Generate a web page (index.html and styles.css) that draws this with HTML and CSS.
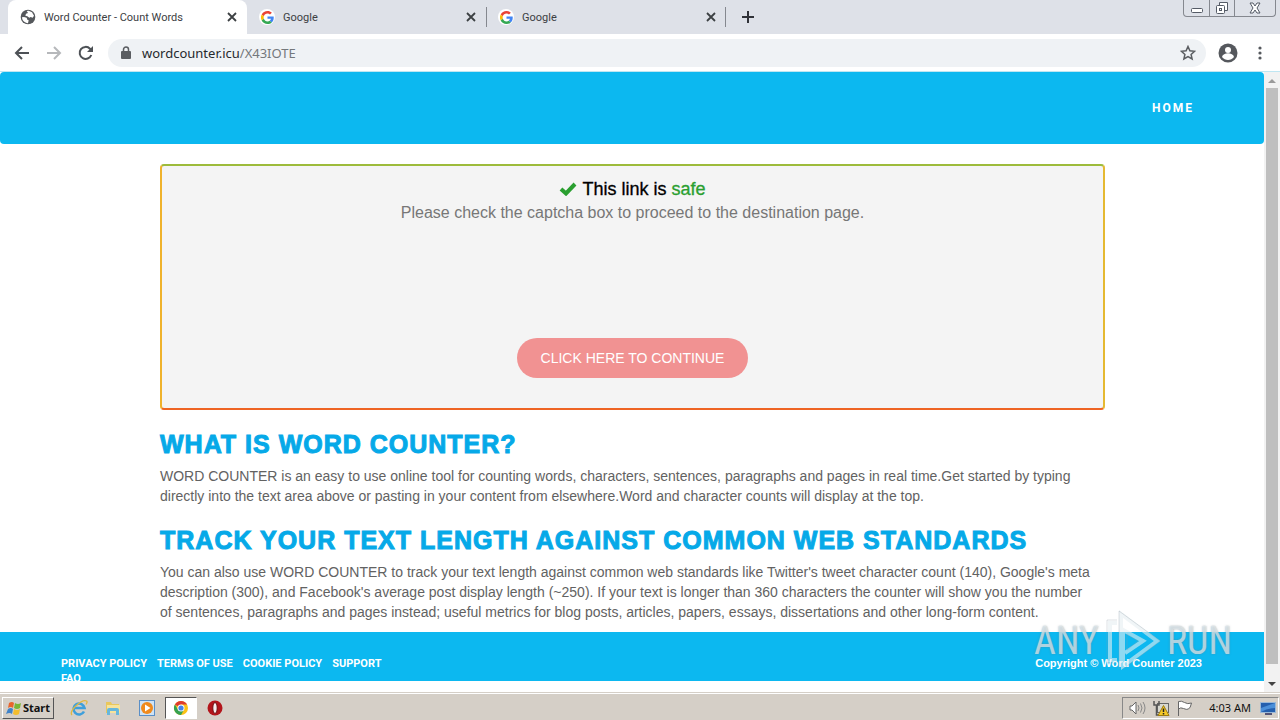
FILE: index.html
```html
<!DOCTYPE html>
<html lang="en">
<head>
<meta charset="utf-8">
<title>Word Counter - Count Words</title>
<link rel="stylesheet" href="styles.css">
</head>
<body>
<svg class="defs" aria-hidden="true">
  <symbol id="google" viewBox="0 0 48 48">
    <path fill="#EA4335" d="M24 9.5c3.5 0 6.700 1.200 9.200 3.600l6.900-6.900C35.900 2.400 30.500 0 24 0 14.600 0 6.500 5.400 2.600 13.200l8 6.200C12.400 13.700 17.700 9.500 24 9.500z"/>
    <path fill="#4285F4" d="M47 24.500c0-1.600-.2-3.100-.4-4.500H24v9h12.900c-.6 3-2.200 5.500-4.700 7.200l7.700 6C44.400 38 47 31.800 47 24.500z"/>
    <path fill="#FBBC05" d="M10.500 28.600a14.500 14.500 0 0 1 0-9.200l-8-6.200a24 24 0 0 0 0 21.600z"/>
    <path fill="#34A853" d="M24 48c6.500 0 11.900-2.100 15.900-5.800l-7.700-6c-2.200 1.500-4.900 2.300-8.200 2.300-6.300 0-11.600-4.200-13.500-9.900l-8 6.200C6.500 42.600 14.600 48 24 48z"/>
  </symbol>
  <symbol id="cross" viewBox="0 0 10 10"><path d="M1 1l8 8M9 1l-8 8" stroke="#3c4043" stroke-width="1.800"/></symbol>
</svg>

<div class="tabstrip">
  <div class="tab tab-active">
    <svg class="favicon" viewBox="0 0 24 24"><circle cx="12" cy="12" r="11" fill="#55585c"/><path fill="#fff" d="M3 12.500l3-.5 4 1 1 3 2 1-1 4.500C7 21 3 17 3 12.500zM10 3l3-.5 5 2.500 3 5-2 3-3-1-2 1-3-2-3-1 1-3 3-1z"/></svg>
    <span class="tab-title">Word Counter - Count Words</span>
    <button class="tab-close" aria-label="Close tab"><svg width="10" height="10"><use href="#cross"/></svg></button>
  </div>
  <div class="tab">
    <span class="favicon favicon-g"><svg width="13" height="13"><use href="#google"/></svg></span>
    <span class="tab-title">Google</span>
    <button class="tab-close" aria-label="Close tab"><svg width="10" height="10"><use href="#cross"/></svg></button>
  </div>
  <div class="tab tab-ruled">
    <span class="favicon favicon-g"><svg width="13" height="13"><use href="#google"/></svg></span>
    <span class="tab-title">Google</span>
    <button class="tab-close" aria-label="Close tab"><svg width="10" height="10"><use href="#cross"/></svg></button>
  </div>
  <button class="new-tab" aria-label="New tab"><svg width="12" height="12"><path d="M6 0v12M0 6h12" stroke="#303238" stroke-width="2"/></svg></button>
  <div class="window-buttons">
    <button aria-label="Minimize"><svg width="14" height="16"><rect x="1.500" y="8.500" width="11" height="4" rx="1" fill="#fff" stroke="#555b66"/></svg></button>
    <button aria-label="Restore"><svg width="14" height="16"><path d="M4.500 5.500v-3h8v8H9" fill="#fff" stroke="#555b66"/><rect x="1.500" y="5.500" width="8" height="8" rx="1" fill="#fff" stroke="#555b66"/><rect x="4.500" y="8.500" width="2" height="2" fill="none" stroke="#555b66"/></svg></button>
    <button aria-label="Close"><svg width="14" height="16"><path d="M2 3h3l2 3 2-3h3L9 8l3 5H9l-2-3-2 3H2l3-5z" fill="#fff" stroke="#555b66"/></svg></button>
  </div>
</div>

<div class="toolbar">
  <button aria-label="Back"><svg width="16" height="16"><path d="M15 8H2M8 2L2 8l6 6" fill="none" stroke="#4d5156" stroke-width="2"/></svg></button>
  <button aria-label="Forward"><svg width="16" height="16"><path d="M1 8h13M8 2l6 6-6 6" fill="none" stroke="#b6b8bb" stroke-width="2"/></svg></button>
  <button aria-label="Reload"><svg width="16" height="16"><path d="M13.300 10A6 6 0 1 1 12 3.700L13.500 5.500" fill="none" stroke="#4d5156" stroke-width="2"/><path d="M15 1v6H9z" fill="#4d5156"/></svg></button>
  <div class="omnibox">
    <svg width="10" height="14"><path d="M2.500 6V3.500a2.500 2.500 0 0 1 5 0V6" fill="none" stroke="#5a5d61" stroke-width="1.500"/><rect y="5" width="10" height="8" rx="1" fill="#5a5d61"/></svg>
    <span class="url">wordcounter.icu<span class="url-path">/X43IOTE</span></span>
    <button aria-label="Bookmark this page"><svg width="16" height="16"><path d="M8 1.500l1.900 4.300 4.700.5-3.500 3.100 1 4.600L8 11.600 3.900 14l1-4.600L1.400 6.300l4.700-.5z" fill="none" stroke="#5a5d61" stroke-width="1.500"/></svg></button>
  </div>
  <button aria-label="Profile"><svg width="20" height="20"><circle cx="10" cy="10" r="9.500" fill="#55585d"/><circle cx="10" cy="7" r="3" fill="#fff"/><path d="M4 14c1-5 11-5 12 0-3 4-9 4-12 0z" fill="#fff"/></svg></button>
  <button aria-label="Menu"><svg width="16" height="16" fill="#55585d"><circle cx="8" cy="3" r="1.600"/><circle cx="8" cy="8" r="1.600"/><circle cx="8" cy="13" r="1.600"/></svg></button>
</div>

<div class="viewport">
  <div class="page">
    <header class="site-header"><nav><a href="#">HOME</a></nav></header>
    <main>
      <section class="card">
        <h1><svg width="18" height="14"><path d="M2 7l5 4.500L16 2" fill="none" stroke="#2a9f30" stroke-width="4"/></svg>This link is <span>safe</span></h1>
        <p>Please check the captcha box to proceed to the destination page.</p>
        <button class="continue">CLICK HERE TO CONTINUE</button>
      </section>
      <h2>WHAT IS WORD COUNTER?</h2>
      <p>WORD COUNTER is an easy to use online tool for counting words, characters, sentences, paragraphs and pages in real time.Get started by typing<br>directly into the text area above or pasting in your content from elsewhere.Word and character counts will display at the top.</p>
      <h2>TRACK YOUR TEXT LENGTH AGAINST COMMON WEB STANDARDS</h2>
      <p>You can also use WORD COUNTER to track your text length against common web standards like Twitter's tweet character count (140), Google's meta<br>description (300), and Facebook's average post display length (~250). If your text is longer than 360 characters the counter will show you the number<br>of sentences, paragraphs and pages instead; useful metrics for blog posts, articles, papers, essays, dissertations and other long-form content.</p>
    </main>
    <footer class="site-footer">
      <nav><a href="#">PRIVACY POLICY</a><a href="#">TERMS OF USE</a><a href="#">COOKIE POLICY</a><a href="#">SUPPORT</a><a href="#">FAQ</a></nav>
      <span>Copyright © Word Counter 2023</span>
    </footer>
  </div>
  <div class="scrollbar">
    <svg width="16" height="16"><path d="M4 11l4-4 4 4z" fill="#9a9a9a"/></svg>
    <div class="thumb"></div>
    <svg width="16" height="16"><path d="M4 6l4 4 4-4z" fill="#444"/></svg>
  </div>
</div>

<div class="taskbar">
  <button class="start"><svg width="16" height="16"><path d="M3 3q3-2 5 0L7 8Q5 6 2 8z" fill="#e8642c"/><path d="M9 3q3 2 6 0l-1 5q-3 2-6 0z" fill="#79b536"/><path d="M2 9q3-2 5 0l-1 5Q4 12 0 14z" fill="#3f83c9"/><path d="M8 9q3 2 6 0l-1 5q-3 2-6 0z" fill="#f4bd2d"/></svg>Start</button>
  <button class="task" aria-label="Internet Explorer"><svg width="18" height="18"><path d="M14 12.500A5.500 5.500 0 1 1 14.500 9H5" fill="none" stroke="#3e9fdb" stroke-width="2.600"/><path d="M2 16C-2 12 12 0 16.500 2c1 .5.500 2-.5 3.500" fill="none" stroke="#e0b840" stroke-width="1.300"/></svg></button>
  <button class="task" aria-label="Explorer"><svg width="18" height="18"><path d="M2 3h5l1 2h7v9H2z" fill="#e9c75c"/><path d="M3 6h13v8H3z" fill="#f7e39a"/><path d="M3 16v-5q0-2 2-2h8q2 0 2 2v5h-3v-4H6v4z" fill="#67b7dc"/></svg></button>
  <button class="task" aria-label="Media Player"><svg width="18" height="18"><rect x="1.500" y="1.500" width="15" height="15" fill="#cfe3f5" stroke="#5a8fc7"/><circle cx="9" cy="9" r="6" fill="#f08a1c"/><path d="M7 5.500L12.500 9 7 12.500z" fill="#fff"/></svg></button>
  <button class="task task-active" aria-label="Chrome"><svg width="16" height="16" viewBox="0 0 16 16"><circle cx="8" cy="8" r="7" fill="#fbc116"/><path d="M8 8L1.900 4.500A7 7 0 0 1 14.100 4.500H8z" fill="#df3b2f"/><path d="M1.900 4.500A7 7 0 0 0 8 15l3-5.200L8 8 5 9.700z" fill="#35a150"/><circle cx="8" cy="8" r="3.500" fill="#fff"/><circle cx="8" cy="8" r="2.600" fill="#4583e8"/></svg></button>
  <button class="task" aria-label="Opera"><svg width="18" height="18"><circle cx="9" cy="9" r="7.500" fill="#b3151b"/><ellipse cx="9" cy="9" rx="2.200" ry="5.500" fill="#f6eeee" stroke="#6f0b0e"/></svg></button>
  <div class="tray">
    <svg width="18" height="18"><path d="M2 7h2l4-4v12l-4-4H2z" fill="#fff" stroke="#666"/><path d="M10 6q2 3 0 6M12.500 4.500q3 4.500 0 9M15 3q4 6 0 12" fill="none" stroke="#888"/></svg>
    <svg width="18" height="18"><rect x="5.500" y="4.500" width="11" height="9" fill="#d8d8d0" stroke="#666"/><path d="M2 2v4h5V2M4.500 6v10H8" fill="none" stroke="#555" stroke-width="1.500"/><path d="M11.500 6.500L17 16.500H6z" fill="#f6c927" stroke="#9c7b10"/><path d="M11.500 9.500v3.500M11.500 14v1.500" stroke="#222" stroke-width="1.500"/></svg>
    <svg width="18" height="18"><path d="M2.500 17V2.500q3-1 6 1t7 .5q-1 5-3 6t-5-.5-5 .5" fill="#fff" stroke="#666"/></svg>
    <time>4:03 AM</time>
    <svg width="18" height="18"><rect x="1.500" y="3.500" width="15" height="10" fill="#245fae" stroke="#9ab8d8"/><path d="M2 9L16 4v5q-8 0-14 4z" fill="#4b8fd9"/><path d="M6 15h7" stroke="#557" stroke-width="2"/></svg>
  </div>
</div>

<div class="watermark">
  <span>ANY</span>
  <svg width="60" height="64" viewBox="0 0 60 64"><path d="M14 14H7v37h7M18 57V5l36 27-34 25V21l20 11-18 12" fill="none" stroke="#e6eef2" stroke-opacity=".6" stroke-width="4"/><path d="M14 11H4v43h10M16 60V2l41 30-37 28M24 25v16l11-9z" fill="none" stroke="#8e9ca6" stroke-opacity=".3"/></svg>
  <span>RUN</span>
</div>
</body>
</html>
```
FILE: styles.css
```css
* { box-sizing: border-box; }
body {
  margin: 0;
  height: 100vh;
  display: flex;
  flex-direction: column;
  overflow: hidden;
  background: #fff;
  font-family: "Liberation Sans", Arial, sans-serif;
}
button { border: 0; padding: 0; background: none; font: inherit; color: inherit; display: flex; align-items: center; justify-content: center; }
a { color: inherit; text-decoration: none; }
svg { display: block; flex: none; }
h1, h2, p { margin: 0; }
.defs { position: absolute; width: 0; height: 0; }

.tabstrip { height: 34px; flex: none; display: flex; align-items: center; background: #dee1e8; padding-left: 8px; font: 11px Roboto, sans-serif; color: #3c4043; }
.tab { width: 239px; height: 34px; display: flex; align-items: center; padding: 0 10px 0 12px; gap: 8px; }
.tab-active { background: #fff; border-radius: 8px 8px 0 0; }
.tab-ruled { width: 240px; background: linear-gradient(#85888f, #85888f) 0 50% / 1px 20px no-repeat, linear-gradient(#85888f, #85888f) 100% 50% / 1px 20px no-repeat; }
.favicon { width: 16px; height: 16px; }
.favicon-g { background: #fff; border-radius: 50%; display: flex; align-items: center; justify-content: center; }
.tab-title { flex: 1; white-space: nowrap; }
.new-tab { width: 44px; height: 28px; }
.window-buttons { margin-left: auto; margin-right: 4px; align-self: flex-start; display: flex; height: 17px; border: 1px solid #85888f; border-top: 0; border-radius: 0 0 4px 4px; }
.window-buttons button { width: 25px; }
.window-buttons button + button { border-left: 1px solid #85888f; }
.window-buttons button:last-child { width: 41px; }

.toolbar { height: 38px; flex: none; display: flex; align-items: center; padding: 0 14px; gap: 16px; border-bottom: 1px solid #bfe6f2; }
.toolbar > button:last-child { margin: 0 -2px; }
.omnibox { flex: 1; height: 28px; margin-left: -2px; margin-right: -4px; border-radius: 14px; background: #eff2f5; display: flex; align-items: center; padding: 0 10px 0 13px; gap: 11px; }
.url { flex: 1; font: 13px "Noto Sans", sans-serif; color: #26292d; }
.url-path { color: #74787c; }

.viewport { flex: 1; min-height: 0; display: flex; }
.page { flex: 1; overflow: hidden; }
.site-header { height: 72px; background: #0cb8f0; border-radius: 4px; display: flex; align-items: center; justify-content: flex-end; padding-right: 70px; color: #fff; font: bold 12px Roboto, sans-serif; letter-spacing: 2px; }
main { padding: 20px 159px 0 160px; color: #626262; font-size: 14px; line-height: 20px; white-space: nowrap; }
.card { height: 246px; border: 2px solid; border-color: #9dbb3b #e5b932 #ee6423 #efb22c; border-radius: 4px; background: #f4f4f4; display: flex; flex-direction: column; align-items: center; padding-top: 11px; margin-bottom: 22px; }
.card h1 { display: flex; align-items: center; gap: 5px; font-size: 18px; font-weight: normal; line-height: 24px; color: #000; -webkit-text-stroke: 0.3px; }
.card h1 span { color: #2a9f30; }
.card p { font-size: 16px; line-height: 24px; color: #777; }
.continue { margin-top: 113px; height: 40px; padding: 0 24px; border-radius: 20px; background: #f19292; color: #fff; font-size: 14px; }
h2 { color: #06a9e8; font-size: 25px; line-height: 24px; letter-spacing: 1px; margin-bottom: 10px; -webkit-text-stroke: 1px; }
main > p + h2 { margin-top: 22px; }
.site-footer { height: 49px; margin-top: 10px; overflow: hidden; background: #0cb8f0; padding: 24px 62px 0 61px; display: flex; justify-content: space-between; color: #fff; font-size: 11px; font-weight: bold; line-height: 15px; }
.site-footer nav { width: 344px; display: flex; flex-wrap: wrap; column-gap: 10px; font-family: Roboto, sans-serif; }

.scrollbar { width: 16px; background: #f2f2f2; display: flex; flex-direction: column; }
.thumb { flex: 1; margin: 0 2px 12px; background: #bfbfbf; }

.taskbar { height: 28px; flex: none; display: flex; align-items: center; background: #d5cfc7; border-top: 1px solid #d5cfc7; box-shadow: inset 0 1px #fff; padding: 2px 1px 0 2px; font: 11px "Noto Sans", sans-serif; color: #111; }
.start, .task-active, .tray { border: 1px solid; border-color: #fff #555 #555 #fff; }
.start { width: 52px; height: 22px; gap: 1px; font-weight: bold; margin-right: 8px; }
.task { width: 34px; height: 22px; }
.task-active { background: #fff; border-color: #555 #fff #fff #555; width: 32px; margin: 0 1px; }
.tray { margin-left: auto; height: 22px; border-color: #888 #fff #fff #888; display: flex; align-items: center; gap: 6px; padding: 0 1px 0 5px; }
.tray time { margin: 0 2px 0 9px; }

.watermark { position: absolute; right: 48px; bottom: 47px; display: flex; align-items: center; gap: 4px; font: 38px "Liberation Sans Narrow", "Roboto Condensed", sans-serif; color: rgba(230, 238, 242, 0.7); text-shadow: 0 0 2px rgba(100, 120, 130, 0.6); pointer-events: none; }
```
